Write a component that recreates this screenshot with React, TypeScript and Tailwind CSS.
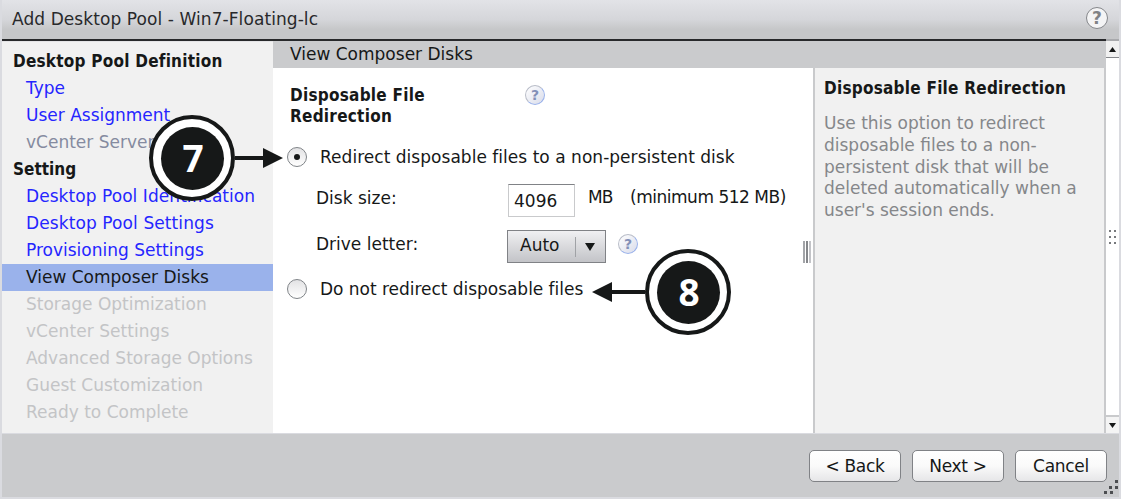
import React from "react";

type Step = { label: string; state: "link" | "visited" | "active" | "disabled"; track?: string };

const definitionSteps: Step[] = [
  { label: "Type", state: "link" },
  { label: "User Assignment", state: "link" },
  { label: "vCenter Server", state: "visited" },
];

const settingSteps: Step[] = [
  { label: "Desktop Pool Identification", state: "link", track: "tracking-[0.06px]" },
  { label: "Desktop Pool Settings", state: "link", track: "tracking-[0.1px]" },
  { label: "Provisioning Settings", state: "link" },
  { label: "View Composer Disks", state: "active" },
  { label: "Storage Optimization", state: "disabled" },
  { label: "vCenter Settings", state: "disabled", track: "tracking-[0.06px]" },
  { label: "Advanced Storage Options", state: "disabled" },
  { label: "Guest Customization", state: "disabled" },
  { label: "Ready to Complete", state: "disabled" },
];

const stepStyles = {
  link: "text-[#2525ff]",
  visited: "text-[#858ba0]",
  active: "bg-[#9ab2eb] text-[#161818]",
  disabled: "text-[#c3c4c6]",
};

function StepItem({ step }: { step: Step }) {
  return (
    <li className={`h-[27px] pl-6 leading-[27px] ${stepStyles[step.state]}`}>
      <span className={step.track}>{step.label}</span>
    </li>
  );
}

function HelpIcon({ blue = false }: { blue?: boolean }) {
  return (
    <span
      className={
        blue
          ? "flex size-[20px] items-center justify-center rounded-full border-[1.5px] border-[#b9bdc8] border-r-[#9ab2eb] border-b-[#9ab2eb] bg-linear-to-br from-white to-[#d9dcea] text-[14px] leading-none font-bold text-[#8390b8]"
          : "flex size-[22px] items-center justify-center rounded-full border border-[#85878b] bg-[#f4f4f5] text-[17px] leading-none font-bold text-[#808286]"
      }
    >
      ?
    </span>
  );
}

function Radio({ checked = false }: { checked?: boolean }) {
  return (
    <span className="flex size-[20px] items-center justify-center rounded-full border-[1.5px] border-[#808488] bg-linear-to-b from-[#e2e2e4] to-white">
      {checked && <span className="size-[6px] rounded-full bg-[#161818]" />}
    </span>
  );
}

function FooterButton({ children }: { children: React.ReactNode }) {
  return (
    <button className="h-8 w-[92px] rounded-[5px] border border-[#808286] bg-linear-to-b from-white via-[#fafafa] to-[#e6e6e8] pt-px text-[17px] leading-[29px] tracking-[-0.3px] whitespace-nowrap">
      {children}
    </button>
  );
}

function Callout({ value, direction }: { value: string; direction: "left" | "right" }) {
  return (
    <div className={`flex items-center ${direction === "left" ? "flex-row-reverse" : ""}`}>
      <div className="flex size-[86px] items-center justify-center rounded-full border-4 border-[#161818] bg-white">
        <div className="flex size-[63px] items-center justify-center rounded-full bg-[#161818] pb-px pl-[2px] font-['Noto_Sans',sans-serif] text-[37px] leading-none font-bold text-white">
          {value}
        </div>
      </div>
      {direction === "right" ? (
        <svg width="48" height="20" viewBox="0 0 48 20">
          <path d="M0 8h28V0l20 10-20 10v-8H0z" fill="#161818" />
        </svg>
      ) : (
        <svg width="53" height="20" viewBox="0 0 53 20">
          <path d="M53 8H20V0L0 10l20 10v-8h33z" fill="#161818" />
        </svg>
      )}
    </div>
  );
}

export default function App() {
  return (
    <div className="relative flex h-[499px] w-[1121px] flex-col overflow-hidden border-x-2 border-[#dadbe0] bg-[#cacbcd] font-['DejaVu_Sans',sans-serif] text-[17px] whitespace-nowrap text-[#161818]">
      <header className="flex h-[39px] shrink-0 items-center justify-between bg-linear-to-b from-[#e2e3e7] via-[#d5d6da] to-[#c6c7c9] to-75% pr-[11px] pl-[10px]">
        <h1 className="tracking-[0.08px] text-[#28292b]">Add Desktop Pool - Win7-Floating-lc</h1>
        <div className="pb-[3px]">
          <HelpIcon />
        </div>
      </header>
      <div className="flex h-[394px] shrink-0">
        <div className="flex w-[1104px] border-t-2 border-[#28292b]">
          <nav className="w-[271px] border-t border-[#e4e4e6] bg-[#f1f1f1] pt-[6px]">
            <h2 className="h-[27px] pl-[11px] font-['DejaVu_Sans_Condensed'] leading-[27px] font-bold tracking-[0.23px]">Desktop Pool Definition</h2>
            <ul>{definitionSteps.map((s) => <StepItem key={s.label} step={s} />)}</ul>
            <h2 className="h-[27px] pl-[11px] font-['DejaVu_Sans_Condensed'] leading-[27px] font-bold">Setting</h2>
            <ul>{settingSteps.map((s) => <StepItem key={s.label} step={s} />)}</ul>
          </nav>
          <div className="flex flex-1 flex-col">
            <h2 className="h-[27px] pl-[17px] leading-[27px]">View Composer Disks</h2>
            <div className="flex flex-1">
              <main className="flex w-[540px] flex-col bg-white">
                <div className="mt-[17px] flex h-[43px] pl-[17px]">
                  <h3 className="w-[235px] font-['DejaVu_Sans_Condensed'] leading-[21px] font-bold tracking-[0.25px]">
                    Disposable File
                    <br />
                    Redirection
                  </h3>
                  <HelpIcon blue />
                </div>
                <label className="mt-[18px] flex h-[22px] items-center gap-[13px] pl-[14px]">
                  <Radio checked />
                  <span className="pt-[2px] tracking-[0.03px]">Redirect disposable files to a non-persistent disk</span>
                </label>
                <div className="mt-[16px] flex h-[33px] pl-[43px]">
                  <span className="w-[192px] leading-[28px]">Disk size:</span>
                  <input className="h-[33px] w-[67px] border border-[#c9cacc] border-t-[#808286] pl-[5px]" defaultValue="4096" />
                  <span className="ml-[13px] w-[42px] leading-[27px] tracking-[-0.8px]">MB</span>
                  <span className="leading-[27px] tracking-[-0.48px]">(minimum 512 MB)</span>
                </div>
                <div className="mt-[13px] flex h-[33px] pl-[43px]">
                  <span className="w-[191px] leading-[28px]">Drive letter:</span>
                  <div className="flex h-[33px] w-[99px] items-center border-[1.5px] border-[#808286] bg-linear-to-b from-[#f0f0f2] to-[#c3c4c8] pl-[12px]">
                    <span className="w-[55px] pb-[3px] leading-[22px]">Auto</span>
                    <span className="h-[20px] w-px bg-[#a0a2a6]" />
                    <svg className="ml-[9px]" width="10" height="8" viewBox="0 0 10 8">
                      <path d="M0 0h10L5 8z" fill="#161818" />
                    </svg>
                  </div>
                  <div className="ml-[12px] pt-[4px]">
                    <HelpIcon blue />
                  </div>
                </div>
                <label className="mt-[15px] flex h-[22px] items-center gap-[13px] pl-[14px]">
                  <Radio />
                  <span className="pt-[2px] tracking-[-0.03px]">Do not redirect disposable files</span>
                </label>
              </main>
              <aside className="w-[293px] border-x-2 border-[#c9cacc] bg-[#f1f1f1] pt-[10px] pl-[9px]">
                <h3 className="h-[21px] font-['DejaVu_Sans_Condensed'] leading-[21px] font-bold tracking-[0.24px]">Disposable File Redirection</h3>
                <p className="mt-[14px] leading-[21.75px] text-[#85878a]">
                  Use this option to redirect
                  <br />
                  disposable files to a non-
                  <br />
                  persistent disk that will be
                  <br />
                  deleted automatically when a
                  <br />
                  user's session ends.
                </p>
              </aside>
            </div>
          </div>
        </div>
        <div className="flex w-[13px] flex-col items-center justify-between border-t-2 border-[#a8a9ac] bg-white">
          <div className="flex h-[17px] w-full items-center justify-center border-b border-[#85878b] bg-[#f1f1f1]">
            <svg width="7" height="5" viewBox="0 0 7 5"><path d="M0 5h7L3.500 0z" fill="#161818" /></svg>
          </div>
          <svg width="9" height="16" viewBox="0 0 9 16">
            {[1, 7, 13].map((y) => (
              <path key={y} d={`M1 ${y}h2v2H1zM6 ${y}h2v2H6z`} fill="#77797c" />
            ))}
          </svg>
          <div className="flex h-[18px] w-full items-center justify-center border-t-2 border-[#c9cacc] bg-[#f4f4f4]">
            <svg width="7" height="5" viewBox="0 0 7 5"><path d="M0 0h7L3.500 5z" fill="#161818" /></svg>
          </div>
        </div>
      </div>
      <footer className="flex h-[66px] items-start justify-end gap-[11px] border-t border-b-2 border-[#dadbe0] pt-[16px] pr-[12px]">
        <FooterButton>&lt; Back</FooterButton>
        <FooterButton>Next &gt;</FooterButton>
        <FooterButton>Cancel</FooterButton>
      </footer>

      <div className="absolute top-[241px] left-[801px] flex h-[22px] gap-px">
        <span className="w-[2px] bg-[#a3a5a9]" />
        <span className="w-[2px] bg-[#85878b]" />
        <span className="w-[2px] bg-[#c3c4c8]" />
      </div>
      <svg className="absolute top-[480px] left-[1101px]" width="16" height="16" viewBox="0 0 16 16">
        <path d="M12 0h3v3h-3zM6 6h3v3H6zM12 6h3v3h-3zM1 11h3v3H1zM7 11h3v3H7z" fill="#4c4e51" />
      </svg>
      <div className="absolute top-[115px] left-[147px]">
        <Callout value="7" direction="right" />
      </div>
      <div className="absolute top-[249px] left-[590px]">
        <Callout value="8" direction="left" />
      </div>
    </div>
  );
}
